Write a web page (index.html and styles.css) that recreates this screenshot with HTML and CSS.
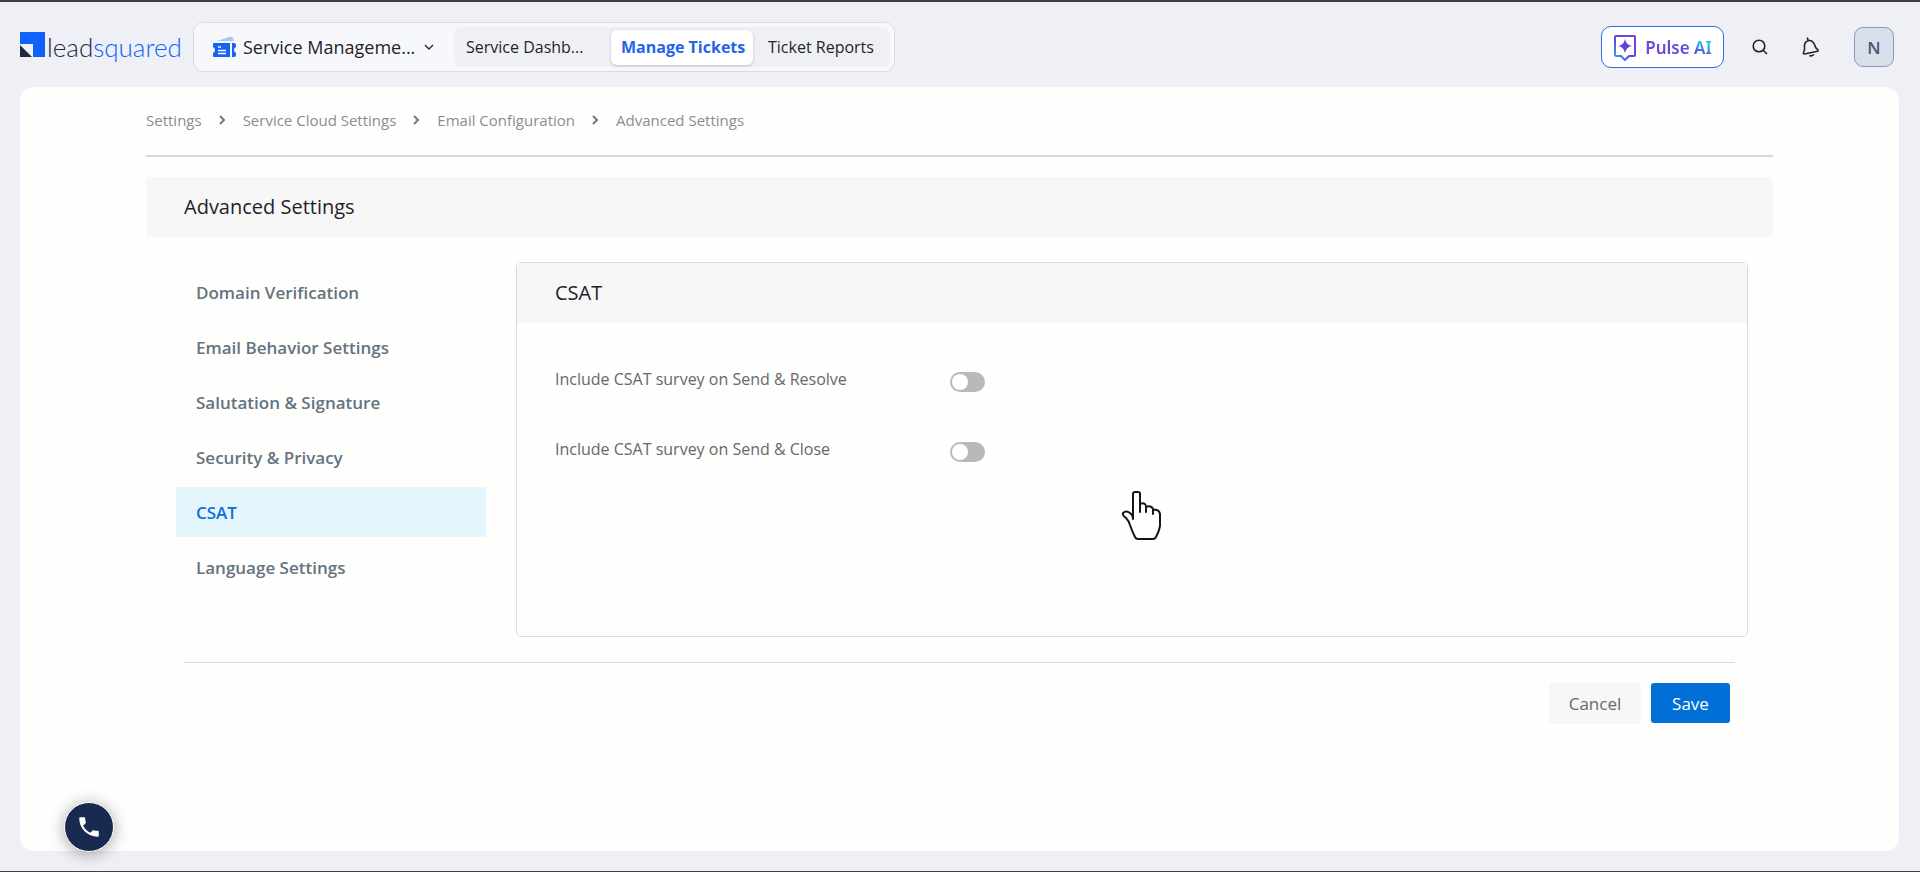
FILE: index.html
```html
<!DOCTYPE html>
<html lang="en">
<head>
  <meta charset="utf-8">
  <meta name="viewport" content="width=device-width, initial-scale=1.0">
  <title>Advanced Settings</title>
  <link rel="stylesheet" href="styles.css">
</head>

<body>

<!-- Header -->
<header class="topbar">
  <a href="#" class="logo">
    <svg class="logo-mark" width="25" height="25" viewBox="0 0 25 25">
      <path fill="#0f62fe" d="M0 0h25v25H13V12H0z"/>
      <path fill="#1b2a3d" d="M0 13l12 12H0z"/>
    </svg>
    <span class="logo-text">lead<span class="logo-blue">squared</span></span>
  </a>

  <nav class="appnav">
    <button type="button" class="app-select">
      <svg width="24" height="22" viewBox="0 0 24 22">
        <path fill="#a9c6fb" d="M5 5L17 1q3-1 4 1l1 3z"/>
        <path fill="#1463f3" d="M2 7h16v14H2q-1 0-1-1v-3q2-1 2-3t-2-3V8q0-1 1-1zM20 7h2q2 0 2 2v2q-2 1-2 3t2 3v2q0 2-2 2h-2z"/>
        <path stroke="#fff" stroke-width="1.5" d="M6 11h3M6 14.500h8M6 17.500h8"/>
      </svg>
      <span class="app-name">Service Manageme...</span>
      <svg width="10" height="6" viewBox="0 0 10 6"><path fill="none" stroke="#222b36" stroke-width="1.4" d="M1 1l4 4 4-4"/></svg>
    </button>
    <div class="tabs">
      <a href="#" class="tab">Service Dashb...</a>
      <a href="#" class="tab active">Manage Tickets</a>
      <a href="#" class="tab">Ticket Reports</a>
    </div>
  </nav>

  <div class="tools">
    <button type="button" class="pulse">
      <svg width="24" height="27" viewBox="0 0 24 27">
        <defs>
          <linearGradient id="pulse" x1="1" y1="0" x2="0" y2="1">
            <stop offset="0" stop-color="#8a35e0"/>
            <stop offset=".6" stop-color="#5a4be0"/>
            <stop offset="1" stop-color="#29b6f0"/>
          </linearGradient>
        </defs>
        <path fill="none" stroke="url(#pulse)" stroke-width="2" stroke-linejoin="round" d="M3 2h18q1 0 1 1v18q0 1-1 1h-5l-4 4-4-4H3q-1 0-1-1V3q0-1 1-1z"/>
        <path fill="#6440dc" d="M12 5q1.200 6 7 7-5.800 1-7 7-1.200-6-7-7 5.800-1 7-7z"/>
      </svg>
      <span class="pulse-text">Pulse AI</span>
    </button>
    <button type="button" class="icon-btn" aria-label="Search">
      <svg width="16" height="16" viewBox="0 0 16 16"><g fill="none" stroke="#1f2329" stroke-width="1.600"><circle cx="7" cy="7" r="5.800"/><path d="M11.200 11.200L15 15"/></g></svg>
    </button>
    <button type="button" class="icon-btn" aria-label="Notifications">
      <svg width="18" height="20" viewBox="0 0 18 20"><g fill="none" stroke="#1f2329" stroke-width="1.600" stroke-linejoin="round" stroke-linecap="round"><path d="M5.500 1l.5 2.500M2.500 17q-1.500 0-1-1.500 1.500-2 1-5Q2 5 6 3.800t6.500 3.700q.8 3.500 3 5 1.200 1 .2 1.800z"/><path d="M8 18.800q2 .5 3.500-1"/></g></svg>
    </button>
    <button type="button" class="avatar">N</button>
  </div>
</header>

<!-- Page -->
<main class="page">
  <nav class="breadcrumb" aria-label="Breadcrumb">
    <a href="#">Settings</a>
    <svg width="7" height="12" viewBox="0 0 7 12"><path d="M1 2l4 4-4 4"/></svg>
    <a href="#">Service Cloud Settings</a>
    <svg width="7" height="12" viewBox="0 0 7 12"><path d="M1 2l4 4-4 4"/></svg>
    <a href="#">Email Configuration</a>
    <svg width="7" height="12" viewBox="0 0 7 12"><path d="M1 2l4 4-4 4"/></svg>
    <a href="#">Advanced Settings</a>
  </nav>

  <h1 class="page-title">Advanced Settings</h1>

  <div class="settings">
    <nav class="side">
      <a href="#">Domain Verification</a>
      <a href="#">Email Behavior Settings</a>
      <a href="#">Salutation &amp; Signature</a>
      <a href="#">Security &amp; Privacy</a>
      <a href="#" class="active">CSAT</a>
      <a href="#">Language Settings</a>
    </nav>

    <section class="panel">
      <h2 class="panel-title">CSAT</h2>
      <div class="panel-body">
        <div class="option">
          <label for="resolve">Include CSAT survey on Send &amp; Resolve</label>
          <input type="checkbox" class="switch" id="resolve">
        </div>
        <div class="option">
          <label for="close">Include CSAT survey on Send &amp; Close</label>
          <input type="checkbox" class="switch" id="close">
        </div>
      </div>
    </section>
  </div>

  <div class="actions">
    <button type="button" class="btn">Cancel</button>
    <button type="button" class="btn save">Save</button>
  </div>
</main>

<!-- Floating items -->
<button type="button" class="call" aria-label="Call">
  <svg width="26" height="26" viewBox="0 0 24 24"><path fill="#fff" d="M6.620 10.790c1.440 2.830 3.760 5.140 6.590 6.590l2.200-2.200c.27-.27.67-.36 1.020-.24 1.120.37 2.330.57 3.570.57.55 0 1 .45 1 1V20c0 .55-.45 1-1 1-9.390 0-17-7.610-17-17 0-.55.45-1 1-1h3.500c.55 0 1 .45 1 1 0 1.250.2 2.450.57 3.570.11.35.03.74-.25 1.020l-2.200 2.200z"/></svg>
</button>
<svg class="pointer" width="40" height="50" viewBox="0 0 40 50">
  <path fill="#fff" stroke="#15151c" stroke-width="2" stroke-linejoin="round" stroke-linecap="round" d="M12 29V4q0-2 2-2h3q2 0 2 2v18-8q5-2 6 2v6-5q5-2 7 2v5-4q6-1 7 4v12q-1 6-4 11-1 2-3 2H17q-2 0-3-2-3-6-5-12-1-4-4-7Q1 25 2 23q3-3 7 0 3 2 3 6"/>
</svg>

</body>
</html>
```

FILE: styles.css
```css
* {
  box-sizing: border-box;
}

body {
  margin: 0;
  min-height: 100vh;
  display: flex;
  flex-direction: column;
  padding: 0 21px 20px 20px;
  border-top: 2px solid #3f4045;
  border-bottom: 1px solid #3f4045;
  background: #eef0f5;
  font-family: "Open Sans", "Noto Sans", sans-serif;
  font-size: 15px;
  color: #1f2329;
}

a {
  color: inherit;
  text-decoration: none;
}

button {
  font: inherit;
  color: inherit;
  border: 0;
  background: none;
  padding: 0;
  cursor: pointer;
}

h1, h2 {
  margin: 0;
  font-size: 20px;
  font-weight: 400;
}

svg {
  flex: none;
}

/* header */
.topbar {
  display: flex;
  align-items: flex-start;
  height: 85px;
  padding-top: 20px;
}

.logo {
  display: flex;
  align-items: center;
  gap: 2px;
  width: 173px;
  height: 45px;
}

.logo-text {
  font-family: Lato, sans-serif;
  font-weight: 300;
  font-size: 26px;
  line-height: 32px;
  padding-top: 4px;
  color: #1b2a3d;
}

.logo-blue {
  color: #0f62fe;
}

.appnav {
  display: flex;
  align-items: center;
  height: 50px;
  padding: 0 4px 0 18px;
  border: 1px solid #d9dce3;
  border-radius: 10px;
  background: #f7f8fc;
}

.app-select {
  display: flex;
  align-items: center;
  width: 242px;
  padding-right: 20px;
  gap: 7px;
}

.app-name {
  font-size: 18px;
  line-height: 24px;
  flex: 1;
  text-align: left;
  white-space: nowrap;
}

.tabs {
  display: grid;
  grid-template-columns: 150px 142px 130px;
  gap: 5px;
  align-items: center;
  height: 40px;
  padding: 0 2px;
  border-radius: 8px;
  background: #eff0f5;
}

.tab {
  height: 35px;
  line-height: 35px;
  padding: 0 10px;
  border-radius: 6px;
  font-size: 16px;
  white-space: nowrap;
}

.tab.active {
  background: #fff;
  color: #2563eb;
  font-weight: 700;
  box-shadow: 0 1px 3px rgba(0, 0, 0, .2);
}

.tools {
  display: flex;
  align-items: center;
  margin-left: auto;
  padding: 4px 5px 0 0;
}

.pulse {
  display: flex;
  align-items: center;
  justify-content: center;
  gap: 8px;
  width: 123px;
  height: 42px;
  border: 1px solid #2f6fe0;
  border-radius: 10px;
  background: #fff;
}

.pulse-text {
  font-family: "Noto Sans", sans-serif;
  font-weight: 600;
  font-size: 17px;
  background: linear-gradient(20deg, #8a35e0, #5b4fe0 55%, #20c4f5 80%);
  -webkit-background-clip: text;
  background-clip: text;
  color: transparent;
}

.icon-btn {
  display: flex;
  align-items: center;
  justify-content: center;
  width: 30px;
  height: 40px;
  margin-left: 21px;
}

.avatar {
  width: 40px;
  height: 40px;
  margin-left: 28px;
  border: 1px solid #8a9bb5;
  border-radius: 9px;
  background: #d9dfea;
  color: #44587a;
  font-size: 17px;
  font-weight: 600;
}

/* page */
.page {
  flex: 1;
  border-radius: 14px;
  background: #fefefd;
  padding: 0 126px 40px;
}

.breadcrumb {
  display: flex;
  align-items: center;
  gap: 17px;
  height: 70px;
  padding-bottom: 3px;
  border-bottom: 2px solid #d6d9dc;
  color: #8a8d91;
}

.breadcrumb path {
  fill: none;
  stroke: #777;
  stroke-width: 2;
}

.page-title {
  height: 60px;
  margin-top: 20px;
  padding: 0 38px;
  border-radius: 4px;
  background: #f7f7f8;
  line-height: 60px;
}

.settings {
  display: flex;
  gap: 30px;
  padding: 25px 25px 25px 30px;
}

.side {
  display: flex;
  flex-direction: column;
  gap: 5px;
  flex: 0 0 310px;
  padding-top: 5px;
}

.side a {
  height: 50px;
  line-height: 52px;
  padding: 0 20px;
  font-size: 17px;
  font-weight: 600;
  color: #65737f;
}

.side .active {
  background: #e4f5fd;
  color: #0b70d8;
}

.panel {
  flex: 1;
  min-height: 375px;
  border: 1px solid #d9dce1;
  border-radius: 5px;
}

.panel-title {
  height: 60px;
  line-height: 60px;
  padding: 0 38px;
  background: #f7f7f8;
}

.panel-body {
  padding: 44px 38px;
}

.option {
  display: grid;
  grid-template-columns: 395px 1fr;
  height: 70px;
  color: #65686d;
}

.option label {
  font-size: 16px;
  line-height: 24px;
}

.switch {
  appearance: none;
  width: 35px;
  height: 20px;
  margin: 5px 0 0;
  padding: 2px;
  border-radius: 10px;
  background: #b9b9b9;
  cursor: pointer;
}

.switch::before {
  content: "";
  display: block;
  width: 16px;
  height: 16px;
  border-radius: 50%;
  background: #fff;
}

.switch:checked {
  background: #0070d8;
}

.switch:checked::before {
  margin-left: auto;
}

.actions {
  display: flex;
  justify-content: flex-end;
  gap: 10px;
  margin: 0 38px;
  padding: 20px 5px 0;
  border-top: 1px solid #d9dce1;
}

.btn {
  height: 41px;
  min-width: 92px;
  padding: 0 18px;
  border-radius: 3px;
  background: #f7f7f8;
  color: #65686d;
  font-size: 17px;
}

.save {
  height: 40px;
  min-width: 79px;
  background: #0070d8;
  color: #fff;
}

/* floating items */
.call {
  position: fixed;
  left: 64px;
  bottom: 20px;
  display: flex;
  align-items: center;
  justify-content: center;
  width: 50px;
  height: 50px;
  border: 1px solid #fff;
  border-radius: 50%;
  background: #182a50;
  box-shadow: 0 2px 16px rgba(0, 0, 0, .35);
}

.pointer {
  position: absolute;
  left: 1121px;
  top: 490px;
}
```
